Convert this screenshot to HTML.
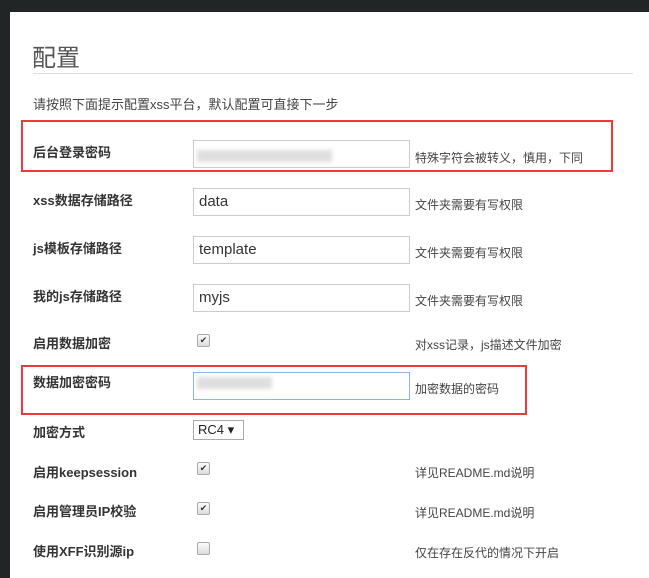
<!DOCTYPE html>
<html><head><meta charset="utf-8"><style>
body{margin:0;width:649px;height:578px;background:#222526;overflow:hidden;font-family:"Liberation Sans","Noto Sans CJK SC",sans-serif;}
.page{position:absolute;left:10px;top:12px;width:639px;height:566px;background:#fff;}
.a{position:absolute;white-space:nowrap;}
.lbl{position:absolute;left:23px;font-weight:bold;font-size:13px;color:#333;}
.help{position:absolute;left:405px;font-size:12px;color:#444;}
.inp{position:absolute;left:183px;border:1px solid #ccc;font-size:15px;color:#333;box-sizing:border-box;padding:4px 5px;width:217px;height:28px;}
.cb{position:absolute;left:187px;width:11px;height:11px;border:1px solid #aaa;border-radius:2px;background:linear-gradient(#fafafa,#ddd);font-size:9px;line-height:11px;text-align:center;color:#333;}
.red{position:absolute;border:2px solid #f0393c;}
.blur{position:absolute;background:#dedede;filter:blur(2px);}
</style></head><body><div class="page">
<div class="a" style="left:22px;top:26px;font-size:24px;color:#555;">配置</div>
<div class="a" style="left:23px;top:61px;width:600px;height:1px;background:#ddd;"></div>
<div class="a" style="left:23px;top:82px;font-size:13px;color:#444;">请按照下面提示配置xss平台，默认配置可直接下一步</div>
<div class="red" style="left:11px;top:108px;width:588px;height:48px;"></div>
<div class="lbl" style="top:130px;">后台登录密码</div>
<div class="inp" style="top:128px;"></div>
<div class="blur" style="left:187px;top:138px;width:135px;height:12px;"></div>
<div class="help" style="top:137px;">特殊字符会被转义，慎用，下同</div>
<div class="lbl" style="top:178px;">xss数据存储路径</div>
<div class="inp" style="top:176px;">data</div>
<div class="help" style="top:184px;">文件夹需要有写权限</div>
<div class="lbl" style="top:226px;">js模板存储路径</div>
<div class="inp" style="top:224px;">template</div>
<div class="help" style="top:232px;">文件夹需要有写权限</div>
<div class="lbl" style="top:274px;">我的js存储路径</div>
<div class="inp" style="top:272px;">myjs</div>
<div class="help" style="top:280px;">文件夹需要有写权限</div>
<div class="lbl" style="top:321px;">启用数据加密</div>
<div class="cb" style="top:322px;">✔</div>
<div class="help" style="top:324px;">对xss记录，js描述文件加密</div>
<div class="red" style="left:11px;top:353px;width:502px;height:46px;"></div>
<div class="lbl" style="top:360px;">数据加密密码</div>
<div class="inp" style="top:360px;border-color:#8fb3e8;"></div>
<div class="blur" style="left:187px;top:365px;width:75px;height:12px;"></div>
<div class="help" style="top:368px;">加密数据的密码</div>
<div class="lbl" style="top:410px;">加密方式</div>
<div class="a" style="left:183px;top:408px;width:51px;height:20px;border:1px solid #aaa;box-sizing:border-box;font-size:13px;padding:1px 4px;color:#222;">RC4 ▾</div>
<div class="lbl" style="top:450px;">启用keepsession</div>
<div class="cb" style="top:450px;">✔</div>
<div class="help" style="top:452px;">详见README.md说明</div>
<div class="lbl" style="top:489px;">启用管理员IP校验</div>
<div class="cb" style="top:490px;">✔</div>
<div class="help" style="top:492px;">详见README.md说明</div>
<div class="lbl" style="top:529px;">使用XFF识别源ip</div>
<div class="cb" style="top:530px;"></div>
<div class="help" style="top:532px;">仅在存在反代的情况下开启</div>
</div></body></html>
